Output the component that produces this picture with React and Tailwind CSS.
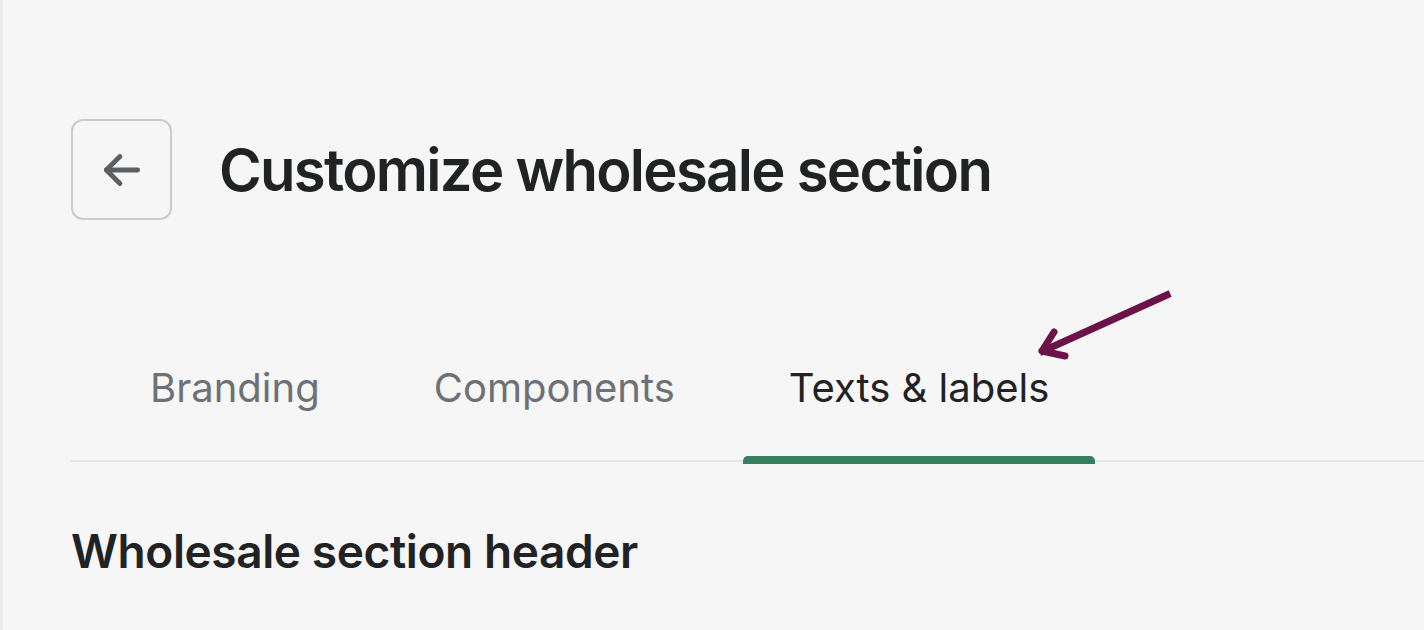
import React from "react";

const tabs = ["Branding", "Components", "Texts & labels"];

const App = () => {
  const active = 2;

  return (
    <div
      className="relative h-[630px] w-[1424px] overflow-hidden bg-[#f6f6f6] border-l-[3px] border-[#ebebeb] pl-[68px] pt-[119px]"
      style={{ fontFamily: "Inter, 'Open Sans', sans-serif" }}
    >
      {/* Header row */}
      <div className="flex items-center gap-[47px]">
        <button className="flex h-[101px] w-[101px] items-center justify-center rounded-[12px] border-2 border-[#c9cccf] bg-[#f6f6f6]">
          <svg width="50" height="50" viewBox="0 0 24 24" fill="none" stroke="#5c5f62" strokeWidth="2.3" strokeLinecap="round" strokeLinejoin="round">
            <path d="M19.5 12H4.5" />
            <path d="M11 5.5L4.5 12L11 18.5" />
          </svg>
        </button>
        <h1 className="text-[58px] font-semibold leading-none tracking-[-1.7px] text-[#202223]">
          Customize wholesale section
        </h1>
      </div>

      {/* Tabs */}
      <div className="relative z-10 mt-[148px] flex gap-[22px] pl-[33px]">
        {tabs.map((tab, i) => (
          <div key={tab} className="flex flex-col">
            <span
              className={`px-[46px] text-[40px] leading-none ${
                i === active ? "text-[#202223]" : "text-[#6d7175]"
              }`}
            >
              {tab}
            </span>
            <div
              className={`mt-[48px] h-2 rounded-t-[5px] ${
                i === active ? "bg-[#367e60]" : "bg-transparent"
              }`}
            />
          </div>
        ))}
      </div>
      <div className="-mt-[4px] h-[2px] bg-[#e4e5e7]" />

      <h2 className="mt-[66px] text-[46px] font-semibold leading-none tracking-[-0.4px] text-[#202223]">
        Wholesale section header
      </h2>

      {/* annotation arrow */}
      <svg className="absolute left-0 top-0" width="1424" height="630" viewBox="0 0 1424 630" fill="none">
        <path d="M1164 295L1040 351" stroke="#6c1246" strokeWidth="7" strokeLinecap="square" />
        <path d="M1051 332L1039 351L1062 356" stroke="#6c1246" strokeWidth="7" strokeLinecap="round" strokeLinejoin="round" />
      </svg>
    </div>
  );
};

export default App;
